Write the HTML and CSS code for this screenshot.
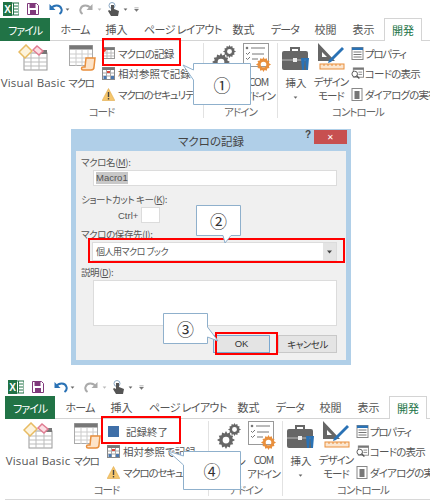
FILE: index.html
```html
<!DOCTYPE html>
<html lang="ja">
<head>
    <meta charset="utf-8">
    <title>マクロの記録</title>
    <link rel="stylesheet" href="styles.css">
</head>
<body>
    <svg class="defs">
        <symbol id="i-excel" viewBox="0 0 16 14">
            <rect x="6" y="1" width="10" height="12" fill="#fff" stroke="#217346"/>
            <path d="M10 4h5M10 7h5M10 10h5M10.500 1v12" stroke="#217346"/>
            <rect x="0" y="0" width="9" height="14" fill="#217346"/>
            <text x="4.500" y="10.500" class="svg-x">X</text>
        </symbol>
        <symbol id="i-save" viewBox="0 0 12 12">
            <path d="M0.500 0.500h9l2 2v9h-11z" fill="#fff" stroke="#80397b"/>
            <rect x="2.500" y="1" width="6" height="4" fill="#80397b"/>
            <rect x="3" y="7" width="6" height="4.500" fill="#80397b"/>
        </symbol>
        <symbol id="i-undo" viewBox="0 0 14 12">
            <path d="M2 5.500C5 1.500 11 1.500 12.500 6c.6 2-.6 4-2 5" fill="none" stroke="currentColor" stroke-width="2"/>
            <path d="M0.500 1v6h6z" fill="currentColor"/>
        </symbol>
        <symbol id="i-touch" viewBox="0 0 13 15">
            <circle cx="5" cy="3.500" r="3" fill="none" stroke="#8aa8c4"/>
            <path d="M4 3v6L2 8 1 9l3 5h7l1-5-5-2V3z" fill="#555"/>
        </symbol>
        <symbol id="i-caret" viewBox="0 0 6 4">
            <path d="M0.500 0.500h5L3 3.500z" fill="currentColor"/>
        </symbol>
        <symbol id="i-qat" viewBox="0 0 6 6">
            <path d="M0.500 0.500h5M0.500 2.500h5L3 5.500z" fill="#777" stroke="#777" stroke-width="0.500"/>
        </symbol>
        <symbol id="i-vb" viewBox="0 0 30 27">
            <rect x="6" y="9" width="23" height="17" fill="#fff" stroke="#999"/>
            <path d="M6 14h23M6 18h23M6 22h23M13 9v17M21 9v17" stroke="#bbb"/>
            <rect x="20" y="6" width="9" height="4" fill="#777"/>
            <path d="M1 8l7-7 6 6-7 7z" fill="#fdf3dc" stroke="#e8bb62" stroke-width="1.500"/>
            <path d="M15 6l4-4 6 5-4 4z" fill="#fbdfe4" stroke="#e07c92" stroke-width="1.500"/>
        </symbol>
        <symbol id="i-macro" viewBox="0 0 28 27">
            <rect x="0.500" y="0.500" width="23" height="20" fill="#fff" stroke="#aaa"/>
            <rect x="0.500" y="0.500" width="23" height="4" fill="#777"/>
            <path d="M1 9h22M1 13h22M1 17h22M7 5v16M13 5v16M19 5v16" stroke="#ccc"/>
            <path d="M17 13h9l-1 9c0 2-1 3-3 3h-8c-2 0-2-3 0-3h2z" fill="#fde3c8" stroke="#e98f3c" stroke-width="1.500"/>
        </symbol>
        <symbol id="i-record" viewBox="0 0 13 13">
            <rect x="1.500" y="0.500" width="11" height="11" fill="#fff" stroke="#999"/>
            <rect x="1.500" y="0.500" width="11" height="2.500" fill="#777"/>
            <path d="M2 6h10M2 9h10M5 3v8M9 3v8" stroke="#bbb"/>
            <circle cx="2" cy="3" r="2" fill="#e0483a"/>
        </symbol>
        <symbol id="i-relative" viewBox="0 0 13 13">
            <rect x="0.500" y="0.500" width="12" height="12" fill="#fff" stroke="#888"/>
            <rect x="0.500" y="0.500" width="12" height="2.500" fill="#777"/>
            <path d="M1 6h11M1 9h11M4.500 3v9M8.500 3v9" stroke="#aaa"/>
            <rect x="5" y="4" width="3" height="2" fill="#d9483b"/>
            <rect x="1.500" y="9" width="3" height="3" fill="#4a78b0"/>
            <rect x="9" y="9" width="3" height="3" fill="#4a78b0"/>
        </symbol>
        <symbol id="i-warn" viewBox="0 0 13 13">
            <path d="M6.500 0.500L12.800 12.500H0.200z" fill="#f5c66c" stroke="#e0a94a" stroke-width="0.600"/>
            <path d="M5.800 4h1.400v5H5.800zM5.800 10h1.400v1.400H5.800z" fill="#444"/>
        </symbol>
        <symbol id="i-gear" viewBox="0 0 16 16">
            <path d="M8 0l1.200 2.200 2.300-.9.400 2.500 2.500.4-.9 2.300L16 8l-2.500 1.500.9 2.300-2.500.4-.4 2.500-2.300-.9L8 16l-1.200-2.200-2.300.9-.4-2.500-2.500-.4.9-2.300L0 8l2.500-1.500-.9-2.300 2.500-.4.4-2.500 2.300.9zM8 5a3 3 0 100 6 3 3 0 000-6z" fill="currentColor" fill-rule="evenodd"/>
        </symbol>
        <symbol id="i-list" viewBox="0 0 26 24">
            <rect x="0.500" y="0.500" width="25" height="23" fill="#fff" stroke="#999"/>
            <circle cx="4" cy="5" r="1.300" fill="#777"/>
            <path d="M8 5h14M3 10l1.500 1.500L7 9M9 11h12M3 15l1.500 1.500L7 14M9 16h6" stroke="#777" fill="none"/>
        </symbol>
        <symbol id="i-case" viewBox="0 0 27 25">
            <path d="M9 6V2h8v4" fill="none" stroke="#666" stroke-width="2"/>
            <rect x="0" y="5" width="26" height="19" rx="2" fill="#666"/>
            <path d="M0 14h26" stroke="#bbb"/>
            <rect x="11" y="12" width="4" height="4" fill="#eee"/>
            <path d="M19 12l1 12h2l1-12zM23 12l1 12h2l1-12z" fill="#2a72b5"/>
        </symbol>
        <symbol id="i-design" viewBox="0 0 28 28">
            <path d="M1 0v18h17zM5 9v5h5z" fill="#666" fill-rule="evenodd"/>
            <path d="M12 17L25 4l2 2-13 13-3 1z" fill="#2a72b5"/>
            <rect x="3" y="21" width="24" height="5" fill="#fbe6d0" stroke="#e98f3c"/>
            <path d="M7 21v2M11 21v2M15 21v2M19 21v2M23 21v2" stroke="#e98f3c"/>
        </symbol>
        <symbol id="i-props" viewBox="0 0 12 13">
            <rect x="0.500" y="0.500" width="11" height="12" fill="#fff" stroke="#888"/>
            <rect x="0.500" y="0.500" width="11" height="2.500" fill="#2a72b5"/>
            <path d="M2 5h8M2 7.500h8M2 10h8" stroke="#777"/>
        </symbol>
        <symbol id="i-code" viewBox="0 0 14 13">
            <rect x="2.500" y="0.500" width="11" height="10" fill="#fff" stroke="#888"/>
            <rect x="2.500" y="0.500" width="11" height="2" fill="#777"/>
            <path d="M8 5h4M8 7.500h4" stroke="#888"/>
            <circle cx="4" cy="7" r="3" fill="#fff" stroke="#555"/>
            <path d="M6 9l3 3" stroke="#555" stroke-width="1.500"/>
        </symbol>
        <symbol id="i-dialog" viewBox="0 0 12 13">
            <rect x="0.500" y="0.500" width="10" height="12" fill="#fff" stroke="#888"/>
            <rect x="3" y="3" width="5" height="8" fill="#777"/>
        </symbol>
    </svg>

    <div class="page">
        <section class="excel">
            <div class="qat">
                <svg class="qat-excel"><use href="#i-excel"/></svg>
                <svg class="qat-save"><use href="#i-save"/></svg>
                <svg class="qat-undo"><use href="#i-undo"/></svg>
                <svg class="qat-caret"><use href="#i-caret"/></svg>
                <svg class="qat-redo"><use href="#i-undo"/></svg>
                <svg class="qat-caret pale"><use href="#i-caret"/></svg>
                <svg class="qat-touch"><use href="#i-touch"/></svg>
                <svg class="qat-caret"><use href="#i-caret"/></svg>
                <svg class="qat-more"><use href="#i-qat"/></svg>
            </div>
            <div class="tabs">
                <span class="tab file">ファイル</span>
                <span class="tab home">ホーム</span>
                <span class="tab insert">挿入</span>
                <span class="tab layout">ページ レイアウト</span>
                <span class="tab math">数式</span>
                <span class="tab data">データ</span>
                <span class="tab review">校閲</span>
                <span class="tab view">表示</span>
                <span class="tab dev">開発</span>
            </div>
            <div class="ribbon">
                <div class="group code">
                    <div class="group-body">
                        <div class="big vb"><svg class="icon-vb"><use href="#i-vb"/></svg><span>Visual Basic</span></div>
                        <div class="big macro"><svg class="icon-macro"><use href="#i-macro"/></svg><span class="kana">マクロ</span></div>
                        <div class="smalls">
                            <div class="small"><svg><use href="#i-record"/></svg><span class="mixed">マクロの記録</span></div>
                            <div class="small"><svg><use href="#i-relative"/></svg><span>相対参照で記録</span></div>
                            <div class="small"><svg><use href="#i-warn"/></svg><span class="kana">マクロのセキュリティ</span></div>
                        </div>
                    </div>
                    <div class="group-name">コード</div>
                </div>
                <div class="group addin">
                    <div class="group-body">
                        <div class="big excel-addin">
                            <div class="gears"><svg class="gear-a"><use href="#i-gear"/></svg><svg class="gear-b"><use href="#i-gear"/></svg></div>
                            <span class="kana">アドイン</span>
                        </div>
                        <div class="big com">
                            <div class="com-icon"><svg class="list"><use href="#i-list"/></svg><svg class="gear-c"><use href="#i-gear"/></svg></div>
                            <span class="kana-lines">COM<br>アドイン</span>
                        </div>
                    </div>
                    <div class="group-name">アドイン</div>
                </div>
                <div class="group control">
                    <div class="group-body">
                        <div class="big ins"><svg class="icon-case"><use href="#i-case"/></svg><span>挿入</span><svg class="ins-caret"><use href="#i-caret"/></svg></div>
                        <div class="big design"><svg class="icon-design"><use href="#i-design"/></svg><span class="kana-lines">デザイン<br>モード</span></div>
                        <div class="smalls">
                            <div class="small"><svg><use href="#i-props"/></svg><span class="kana">プロパティ</span></div>
                            <div class="small"><svg><use href="#i-code"/></svg><span class="mixed">コードの表示</span></div>
                            <div class="small"><svg><use href="#i-dialog"/></svg><span class="mixed">ダイアログの実行</span></div>
                        </div>
                    </div>
                    <div class="group-name">コントロール</div>
                </div>
            </div>
        </section>

        <section class="dialog">
            <div class="titlebar">
                <span class="title">マクロの記録</span>
                <span class="help">?</span>
                <span class="close">✕</span>
            </div>
            <div class="dialog-body">
                <div class="label">マクロ名(<u>M</u>):</div>
                <div class="field name-field"><span class="selected">Macro1</span></div>
                <div class="label shortcut-label">ショートカット キー(<u>K</u>):</div>
                <div class="shortcut"><span>Ctrl+</span><div class="field key-field"></div></div>
                <div class="label store-label">マクロの保存先(<u>I</u>):</div>
                <div class="field combo"><span>個人用マクロ ブック</span><div class="combo-arrow"><svg><use href="#i-caret"/></svg></div></div>
                <div class="label desc-label">説明(<u>D</u>):</div>
                <div class="field desc"></div>
                <div class="buttons">
                    <div class="btn ok">OK</div>
                    <div class="btn cancel">キャンセル</div>
                </div>
            </div>
        </section>

        <section class="excel second">
            <div class="qat">
                <svg class="qat-excel"><use href="#i-excel"/></svg>
                <svg class="qat-save"><use href="#i-save"/></svg>
                <svg class="qat-undo"><use href="#i-undo"/></svg>
                <svg class="qat-caret"><use href="#i-caret"/></svg>
                <svg class="qat-redo"><use href="#i-undo"/></svg>
                <svg class="qat-caret pale"><use href="#i-caret"/></svg>
                <svg class="qat-touch"><use href="#i-touch"/></svg>
                <svg class="qat-caret"><use href="#i-caret"/></svg>
                <svg class="qat-more"><use href="#i-qat"/></svg>
            </div>
            <div class="tabs">
                <span class="tab file">ファイル</span>
                <span class="tab home">ホーム</span>
                <span class="tab insert">挿入</span>
                <span class="tab layout">ページ レイアウト</span>
                <span class="tab math">数式</span>
                <span class="tab data">データ</span>
                <span class="tab review">校閲</span>
                <span class="tab view">表示</span>
                <span class="tab dev">開発</span>
            </div>
            <div class="ribbon">
                <div class="group code">
                    <div class="group-body">
                        <div class="big vb"><svg class="icon-vb"><use href="#i-vb"/></svg><span>Visual Basic</span></div>
                        <div class="big macro"><svg class="icon-macro"><use href="#i-macro"/></svg><span class="kana">マクロ</span></div>
                        <div class="smalls">
                            <div class="small"><div class="stop"></div><span>記録終了</span></div>
                            <div class="small"><svg><use href="#i-relative"/></svg><span>相対参照で記録</span></div>
                            <div class="small"><svg><use href="#i-warn"/></svg><span class="kana">マクロのセキュリティ</span></div>
                        </div>
                    </div>
                    <div class="group-name">コード</div>
                </div>
                <div class="group addin">
                    <div class="group-body">
                        <div class="big excel-addin">
                            <div class="gears"><svg class="gear-a"><use href="#i-gear"/></svg><svg class="gear-b"><use href="#i-gear"/></svg></div>
                            <span class="kana">アドイン</span>
                        </div>
                        <div class="big com">
                            <div class="com-icon"><svg class="list"><use href="#i-list"/></svg><svg class="gear-c"><use href="#i-gear"/></svg></div>
                            <span class="kana-lines">COM<br>アドイン</span>
                        </div>
                    </div>
                    <div class="group-name">アドイン</div>
                </div>
                <div class="group control">
                    <div class="group-body">
                        <div class="big ins"><svg class="icon-case"><use href="#i-case"/></svg><span>挿入</span><svg class="ins-caret"><use href="#i-caret"/></svg></div>
                        <div class="big design"><svg class="icon-design"><use href="#i-design"/></svg><span class="kana-lines">デザイン<br>モード</span></div>
                        <div class="smalls">
                            <div class="small"><svg><use href="#i-props"/></svg><span class="kana">プロパティ</span></div>
                            <div class="small"><svg><use href="#i-code"/></svg><span class="mixed">コードの表示</span></div>
                            <div class="small"><svg><use href="#i-dialog"/></svg><span class="mixed">ダイアログの実行</span></div>
                        </div>
                    </div>
                    <div class="group-name">コントロール</div>
                </div>
            </div>
        </section>

        <!-- red marks and speech bubbles lie over the screenshots -->
        <div class="mark mark-record"></div>
        <div class="mark mark-combo"></div>
        <div class="mark mark-ok"></div>
        <div class="mark mark-stop"></div>

        <div class="callout callout-1">
            <svg width="58" height="42"><path d="M0.500 0.500H57.500V41.500H0.500V17L-10 2L0.500 7z"/></svg>
            <span>①</span>
        </div>
        <div class="callout callout-2">
            <svg width="45" height="31"><path d="M0.500 0.500H44.500V30.500H35L29 38L27 30.500H0.500z"/></svg>
            <span>②</span>
        </div>
        <div class="callout callout-3">
            <svg width="45" height="31"><path d="M0.500 0.500H44.500V14L55 28L44.500 24V30.500H0.500z"/></svg>
            <span>③</span>
        </div>
        <div class="callout callout-4">
            <svg width="58" height="39"><path d="M0.500 0.500H57.500V38.500H0.500V14L-15 0L0.500 5z"/></svg>
            <span>④</span>
        </div>
    </div>
</body>
</html>
```

FILE: styles.css
```css
* {
    margin: 0;
    padding: 0;
    box-sizing: border-box;
}

body {
    background: white;
    font-family: "Noto Sans CJK JP", sans-serif;
    font-feature-settings: "palt";
    color: #555;
    font-size: 10.5px;
}

svg {
    display: block;
    flex: none;
}

.defs {
    display: none;
}

.svg-x {
    font-family: "Liberation Sans", sans-serif;
    font-size: 10px;
    font-weight: bold;
    fill: white;
    text-anchor: middle;
}

.page {
    position: relative;
    width: 430px;
    height: 500px;
    overflow: hidden;
}

.excel {
    height: 119px;
    overflow: hidden;
}

.second {
    height: 122px;
    margin-top: 13px;
    padding-left: 5px;
}

/* narrow UI font in the original, so the kana are pulled together */
.kana {
    letter-spacing: -1.2px;
}

.kana-lines {
    letter-spacing: -1px;
}

.mixed {
    letter-spacing: -0.8px;
}

/* quick access bar */
.qat {
    display: flex;
    align-items: center;
    height: 18px;
    padding-left: 3px;
    color: #666;
}

.qat-excel { width: 16px; height: 14px; margin-right: 8px; }
.qat-save { width: 12px; height: 12px; margin-right: 10px; }
.qat-undo { width: 14px; height: 12px; margin-right: 2px; color: #2a72b5; }
.qat-redo { width: 14px; height: 12px; margin: 0 4px 0 3px; color: #aaa; transform: scaleX(-1); }
.qat-caret { width: 5px; height: 3px; margin-right: 6px; }
.qat-caret.pale { color: #bbb; margin-right: 5px; }
.qat-touch { width: 13px; height: 15px; margin-right: 3px; }
.qat-more { width: 5px; height: 5px; }

/* tabs */
.tabs {
    display: flex;
    height: 23px;
    border-bottom: 1px solid #d4d4d4;
    font-size: 11px;
    width: 430px;
}

.tab {
    display: flex;
    justify-content: center;
    align-items: center;
    height: 22px;
    flex: none;
    color: #555;
}

.file {
    width: 50px;
    background: #217346;
    color: white;
    height: 23px;
    letter-spacing: -1px;
}

.home { width: 50px; letter-spacing: -0.8px; }
.insert { width: 33px; }
.layout { width: 81px; margin-left: 11px; justify-content: flex-start; white-space: nowrap; letter-spacing: -0.6px; }
.math { width: 37px; }
.data { width: 46px; letter-spacing: -0.8px; }
.review { width: 35px; }
.view { width: 41px; }
.dev {
    width: 38px;
    height: 23px;
    color: #217346;
    background: white;
    border: 1px solid #d4d4d4;
    border-bottom: none;
}

/* ribbon */
.ribbon {
    display: flex;
    height: 78px;
    width: 430px;
}

.second .ribbon {
    height: 81px;
    border-bottom: 1px solid #d8d8d8;
}

.group {
    display: flex;
    flex-direction: column;
    height: 75px;
    margin-top: 2px;
    flex: none;
}

.code, .addin {
    border-right: 1px solid #e2e2e2;
}

.code { width: 204px; }
.addin { width: 74px; }
.control { width: 160px; }

.group-body {
    display: flex;
    height: 63px;
}

.group-name {
    height: 12px;
    line-height: 12px;
    text-align: center;
    color: #666;
    font-size: 10.5px;
    letter-spacing: -1px;
}

.big {
    display: flex;
    flex-direction: column;
    align-items: center;
    line-height: 14px;
    text-align: center;
    white-space: nowrap;
    font-size: 10.5px;
}

.vb { width: 64px; padding-left: 2px; }
.macro { width: 34px; }
.icon-vb { width: 30px; height: 27px; margin: 1px 0 5px; }
.icon-macro { width: 28px; height: 27px; margin: 2px 0 4px 4px; }

.vb > span {
    font-family: "Open Sans", sans-serif;
    font-size: 11.5px;
    letter-spacing: 0.2px;
}

.smalls {
    display: flex;
    flex-direction: column;
}

.code .smalls { margin-left: 4px; }
.control .smalls { margin-left: 3px; }

.small {
    display: flex;
    align-items: center;
    gap: 3px;
    height: 20.500px;
    white-space: nowrap;
    font-size: 10.5px;
}

.control .small { gap: 1px; }

.small svg {
    width: 13px;
    height: 13px;
}

.stop {
    width: 11px;
    height: 11px;
    margin: 0 4px 0 1px;
    background: #3f6fa8;
}

.excel-addin { width: 37px; padding-left: 2px; }
.com { width: 35px; }

.gears {
    position: relative;
    width: 24px;
    height: 26px;
    margin: 2px 0 6px;
    color: #666;
}

.gear-a, .gear-b, .gear-c {
    position: absolute;
}

.gear-a { width: 18px; height: 18px; left: 0; bottom: 0; }
.gear-b { width: 13px; height: 13px; right: 0; top: 0; }

.com-icon {
    position: relative;
    width: 28px;
    height: 29px;
    margin: 0 0 3px -3px;
}

.list { width: 26px; height: 24px; }
.gear-c { width: 15px; height: 15px; right: 0; bottom: 0; color: #e98f3c; }

.ins { width: 40px; }
.icon-case { width: 27px; height: 25px; margin: 3px 0 5px; }
.ins-caret { width: 5px; height: 3px; margin-top: 6px; color: #666; }

.design { width: 34px; }
.icon-design { width: 28px; height: 28px; margin: 0 0 4px; }

/* dialog */
.dialog {
    width: 280px;
    height: 236px;
    margin: 10px 0 0 71px;
    background: #b0cfe8;
    padding: 0 5px 5px;
}

.titlebar {
    display: flex;
    position: relative;
    height: 22px;
    align-items: center;
    justify-content: center;
    font-size: 11.5px;
    color: #444;
}

.title {
    margin-top: 1px;
}

.help {
    position: absolute;
    left: 229px;
    top: 0;
    font-family: "Liberation Sans", sans-serif;
    font-weight: bold;
    font-size: 10px;
}

.close {
    position: absolute;
    right: -1px;
    top: 1px;
    width: 33px;
    height: 14px;
    line-height: 14px;
    background: #c75050;
    color: white;
    text-align: center;
    font-size: 8px;
}

.dialog-body {
    height: 209px;
    background: #f0f0f0;
    padding: 5px 5px 0;
    font-size: 9.5px;
    color: #555;
}

.label {
    height: 13px;
    line-height: 13px;
    letter-spacing: -0.4px;
}

.field {
    background: white;
    border: 1px solid #dcdcdc;
}

.name-field {
    height: 16px;
    margin: 1px 4px 0 12px;
    padding: 1px 2px;
    line-height: 12px;
    font-family: "Liberation Sans", sans-serif;
    font-size: 9.5px;
}

.selected {
    background: #c8c8c8;
    display: inline-block;
}

.shortcut-label { margin-top: 7px; }

.shortcut {
    display: flex;
    align-items: center;
    justify-content: flex-start;
    height: 16px;
    margin-top: 1px;
    padding-left: 37px;
    gap: 3px;
    font-family: "Liberation Sans", sans-serif;
    font-size: 9.5px;
}

.key-field {
    width: 19px;
    height: 16px;
}

.store-label { margin-top: 5px; }

.combo {
    display: flex;
    align-items: center;
    justify-content: space-between;
    height: 19px;
    margin: 1px 4px 0 11px;
    padding-left: 3px;
    font-size: 9px;
    letter-spacing: -0.5px;
}

.combo-arrow {
    display: flex;
    align-items: center;
    justify-content: center;
    width: 13px;
    height: 17px;
    background: #e4e4e4;
    color: #444;
}

.combo-arrow svg {
    width: 7px;
    height: 4px;
}

.desc-label { margin-top: 5px; }

.desc {
    height: 46px;
    margin: 1px 4px 0 12px;
}

.buttons {
    display: flex;
    justify-content: flex-end;
    gap: 8px;
    margin: 9px 4px 0 0;
}

.btn {
    height: 18px;
    line-height: 16px;
    text-align: center;
    background: #e4e4e4;
    border: 1px solid #c8c8c8;
    color: #333;
}

.ok {
    width: 57px;
    border-color: #7aa8d0;
    font-family: "Liberation Sans", sans-serif;
    font-size: 9.5px;
}

.cancel { width: 59px; font-size: 9.5px; letter-spacing: -0.5px; }

/* overlays */
.mark {
    position: absolute;
    border: 2.500px solid #f00;
}

.mark-record { left: 102px; top: 38px; width: 79px; height: 28px; }
.mark-combo { left: 88px; top: 238px; width: 257px; height: 25px; }
.mark-ok { left: 215px; top: 332px; width: 63px; height: 23px; }
.mark-stop { left: 101px; top: 416px; width: 80px; height: 28px; }

.callout {
    position: absolute;
    display: flex;
    align-items: center;
    justify-content: center;
    font-size: 17px;
    color: #333;
}

.callout svg {
    position: absolute;
    left: 0;
    top: 0;
    overflow: visible;
}

.callout path {
    fill: white;
    stroke: #8fb0cc;
}

.callout span {
    position: relative;
}

.callout-1 { left: 193px; top: 63px; width: 58px; height: 42px; }
.callout-2 { left: 196px; top: 205px; width: 45px; height: 31px; }
.callout-3 { left: 163px; top: 313px; width: 45px; height: 31px; }
.callout-4 { left: 183px; top: 451px; width: 58px; height: 39px; }
```
